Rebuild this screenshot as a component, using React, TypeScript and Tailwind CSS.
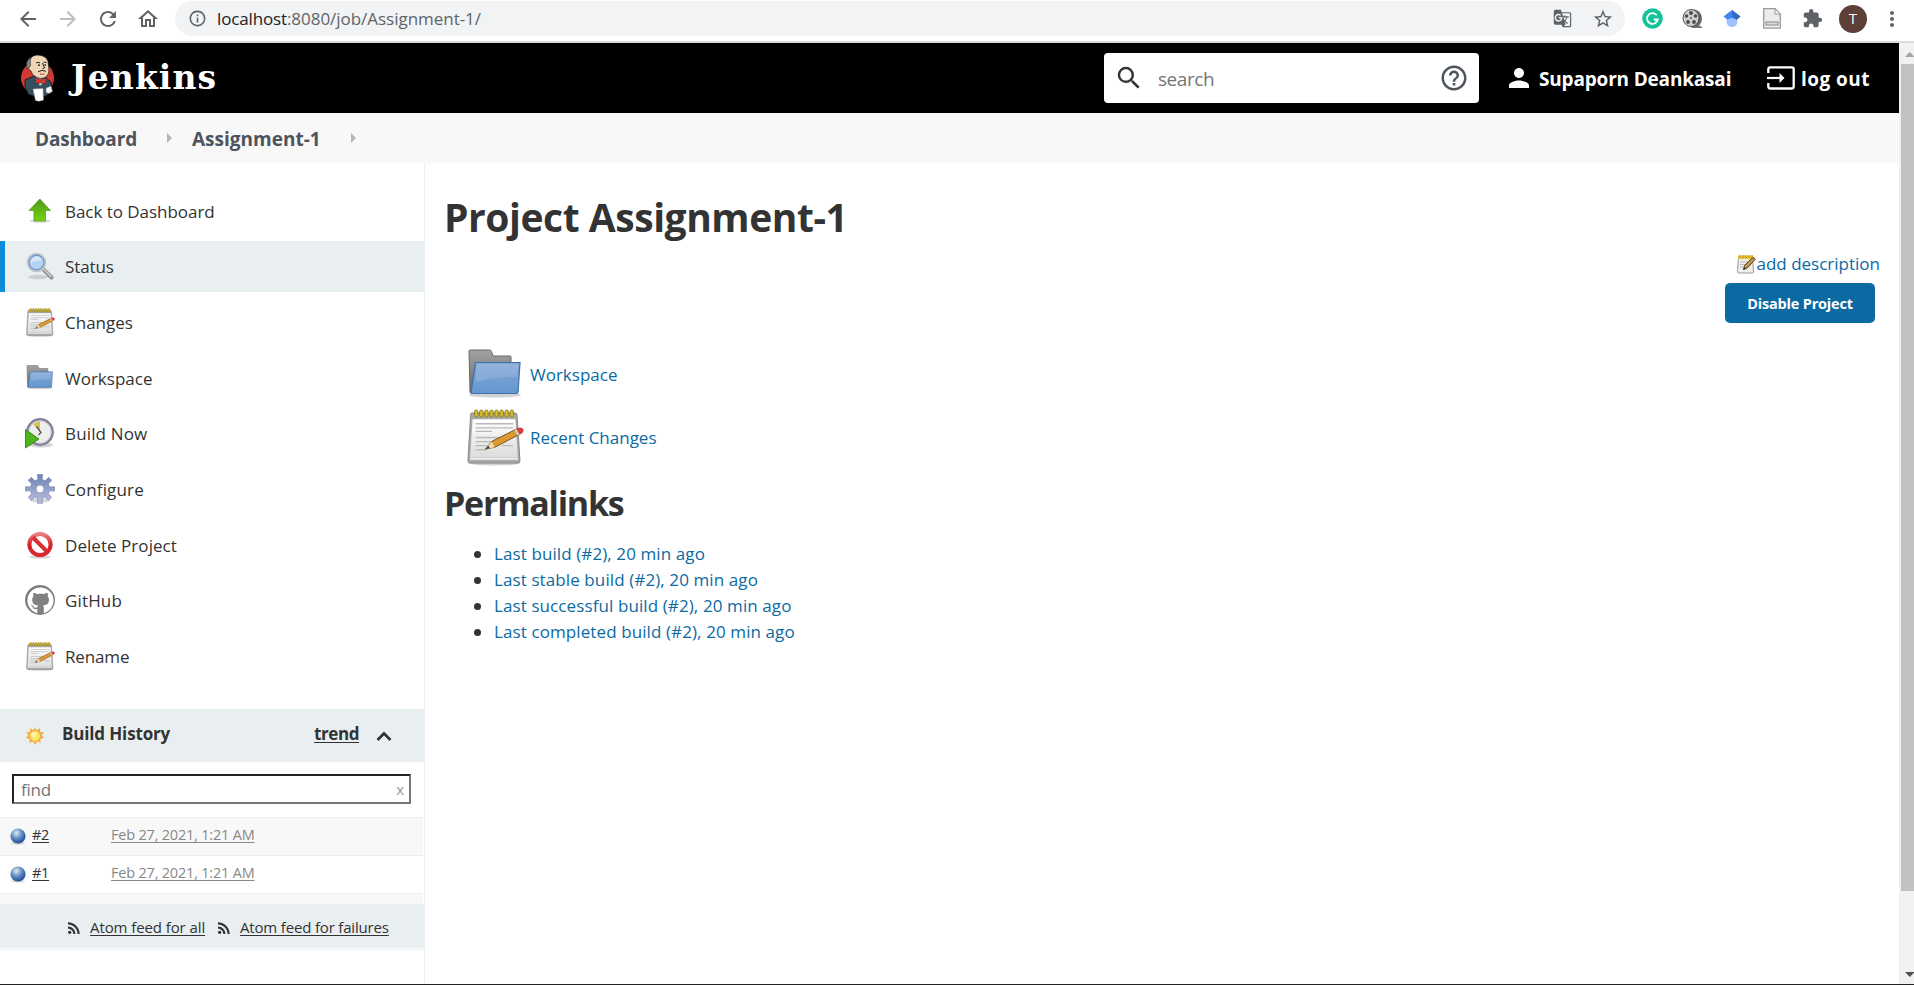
import type { ReactNode } from 'react';
import {
  MdArrowBack, MdArrowForward, MdRefresh, MdOutlineHome, MdInfoOutline, MdGTranslate,
  MdStarBorder, MdExtension, MdMoreVert, MdSearch, MdHelpOutline, MdPerson, MdRssFeed,
} from 'react-icons/md';
import { FaGithub } from 'react-icons/fa';

function T({ className = '', children }: { className?: string; children: ReactNode }) {
  return <span className={'whitespace-nowrap ' + className}>{children}</span>;
}

function JenkinsLogo() {
  return (
    <svg width="36" height="50" viewBox="0 0 36 50">
      <circle cx="18.500" cy="25" r="16.500" fill="#d33833" />
      <path d="M6 27l9-4h10l7 6 1 9-6 5H14L9 41 6 33z" fill="#335061" stroke="#111" strokeWidth=".8" />
      <path d="M16 25l5 8 7-7z" fill="#a9c8d8" />
      <path d="M9.500 9Q11 3 18 2Q27 2 29 8.500L30 17Q29.500 25 22 25.500Q14 24.500 12 18L8.500 15z" fill="#f0d6b7" stroke="#222" strokeWidth=".7" />
      <path d="M8 16Q6 7 12.500 4Q10.500 7.500 11.500 12.500L10 15z" fill="#8a8583" stroke="#222" strokeWidth=".6" />
      <path d="M17 10q2-1.500 4 0M24.500 9.500q1.500-1 3 0M23.500 10l2 5-2 .8M19 18.800q4-2.500 8-.5" fill="none" stroke="#222" strokeWidth="1" />
      <path d="M19 12.300h1.800M25.500 12h1.500" stroke="#222" strokeWidth="1.400" />
      <path d="M21 21q2.500 1 4.500-.2" fill="none" stroke="#9c4a3c" strokeWidth="1" />
      <path d="M16.500 24.500l4.500 2.500 6-2v6.500l-5-2-5.500 1.500z" fill="#d33833" stroke="#7a1512" strokeWidth=".7" />
      <path d="M14 36l10-.5.5 11.500q-4 2-8 .5z" fill="#fff" stroke="#999" strokeWidth=".5" />
      <path d="M27 35l5-2 1.500 5.500-3.500 2-3-1z" fill="#f4f1ee" stroke="#777" strokeWidth=".6" />
    </svg>
  );
}

function Notepad({ size }: { size: number }) {
  return (
    <svg width={size} height={size} viewBox="0 0 56 56">
      <defs>
        <linearGradient id="paper" x1="0" y1="0" x2="0" y2="1"><stop offset="0" stopColor="#fff" /><stop offset="1" stopColor="#dcdcdc" /></linearGradient>
      </defs>
      <ellipse cx="27" cy="53.500" rx="24" ry="2" fill="#000" opacity=".18" />
      <path d="M5 4h42q2 0 2.200 3L52 50q0 3-2 3H3q-2 0-2-3L3.500 7Q3.500 4 5 4z" fill="#aaa" stroke="#888" strokeWidth="1" />
      <path d="M5.500 10h42L50 48H3z" fill="url(#paper)" />
      <path d="M3 49h47" stroke="#eee" strokeWidth="1.500" />
      <path d="M8.500 14.500h37M8.500 18.500h37M8.500 22h16M8.500 28h31M8.500 32h26M8.500 36h14M34 36h11M8.500 40h10" stroke="#b9b9b9" strokeWidth="1.300" />
      {[0, 1, 2, 3, 4, 5, 6, 7].map((i) => (
        <rect key={i} x={7.4 + i * 5} y="1" width="3.300" height="7" rx="1.600" fill="#d8bd2c" stroke="#8d7a18" strokeWidth=".9" />
      ))}
      <path d="M18 39.500l6-7.500 24-12 3.500 5-24 12.500z" fill="#d99a35" stroke="#7b4c11" strokeWidth=".9" />
      <path d="M24 32l3.500 5.500-9.500 2z" fill="#ecd9ac" />
      <path d="M18 39.500l3-3.500 1.300 2.500z" fill="#333" />
      <path d="M46.500 20.800l3 5.200 2.500-1.300-3-5.200z" fill="#ccc" />
      <path d="M49 19.500q4-2 6 .5 1 3-3 4.700z" fill="#e83a34" stroke="#a32320" strokeWidth=".6" />
    </svg>
  );
}

function EditNote() {
  return (
    <svg width="19" height="20" viewBox="0 0 19 20">
      <path d="M1.500 2.500h14l1 15.500q0 1-1 1H1.500q-1 0-1-1z" fill="#eeeeec" stroke="#9a9a96" />
      <path d="M1 1.500h15V5H1z" fill="#ecc63c" />
      <path d="M3 1v3M6 1v3M9 1v3M12 1v3M15 1v3" stroke="#b28d18" strokeWidth="1" />
      <path d="M3 8h9M3 10.500h6M3 13h4" stroke="#bbb" />
      <path d="M6.500 15.500l1.200-4 7.500-7.500q2-1 3 1.200l-7.600 8.500z" fill="#c79a4e" stroke="#4f3a17" strokeWidth="1" />
      <path d="M6.500 15.500l.6-2 1.500 1.400z" fill="#222" />
    </svg>
  );
}

function Folder({ className }: { className: string }) {
  return (
    <svg className={className} viewBox="0 0 56 50">
      <defs>
        <linearGradient id="fold" x1="0" y1="0" x2="0" y2="1"><stop offset="0" stopColor="#86aad6" /><stop offset="1" stopColor="#6396cf" /></linearGradient>
        <linearGradient id="back" x1="0" y1="0" x2="0" y2="1"><stop offset="0" stopColor="#a3a3a3" /><stop offset="1" stopColor="#666" /></linearGradient>
      </defs>
      <ellipse cx="28" cy="46" rx="26" ry="2.500" fill="#000" opacity=".18" />
      <path d="M3 1h20q1 0 1.500 1.500L26 7h17q1 0 1 1v36H4Q3 44 3 43L2 2q0-1 1-1z" fill="url(#back)" stroke="#6a6a6a" />
      <path d="M8.500 13.500h44.500L51 43.500q-.2 1-1.200 1H5q-1 0-1-1z" fill="url(#fold)" stroke="#3d6ead" strokeWidth="1.200" />
      <path d="M9.800 15h41.500l-.9 13Q30 27 8.600 33z" fill="#fff" opacity=".12" />
    </svg>
  );
}

function UpArrow() {
  return (
    <svg width="30" height="30" viewBox="0 0 30 30">
      <defs><linearGradient id="up" x1="0" y1="0" x2="0" y2="1"><stop offset="0" stopColor="#4d9a1c" /><stop offset="1" stopColor="#74d40e" /></linearGradient></defs>
      <ellipse cx="15" cy="25" rx="10.500" ry="1.800" fill="#000" opacity=".15" />
      <path d="M14.800 3L25.500 14.500h-5V25H9V14.500H4z" fill="url(#up)" stroke="#5a9c2c" strokeWidth=".8" />
    </svg>
  );
}

function Magnifier() {
  return (
    <svg width="30" height="30" viewBox="0 0 30 30">
      <ellipse cx="13" cy="25" rx="10" ry="2.200" fill="#000" opacity=".13" />
      <path d="M18 17l8.500 8.500" stroke="#8d8d8d" strokeWidth="4" strokeLinecap="round" />
      <path d="M18 16.500l8 8" stroke="#c4c4c4" strokeWidth="2" strokeLinecap="round" />
      <circle cx="11.500" cy="10.500" r="8.600" fill="#b4d2f2" stroke="#c2c5c9" strokeWidth="2.400" />
      <circle cx="11.500" cy="10.500" r="7.400" fill="none" stroke="#6b93c6" strokeWidth="1.100" />
      <path d="M5.500 11Q6 4.500 12 4.500q4 .5 5 4-7 0-11.500 2.500z" fill="#fff" opacity=".45" />
    </svg>
  );
}

function BuildNow() {
  return (
    <svg width="30" height="32" viewBox="0 0 30 32">
      <ellipse cx="16" cy="28" rx="12" ry="2.500" fill="#000" opacity=".18" />
      <circle cx="15" cy="15" r="12.700" fill="#eeeeea" stroke="#85839c" strokeWidth="2.500" />
      <circle cx="15" cy="15" r="11" fill="none" stroke="#d5d4de" strokeWidth="1" />
      <path d="M15 14L8 7.500Q11 4.500 15 4.500z" fill="#d8c152" />
      <path d="M11.500 9.500l4.500 6-2.500 2.500" fill="none" stroke="#555" strokeWidth="1.300" />
      <path d="M.5 12.500L14 22 .5 31z" fill="#4cb51d" stroke="#397f18" strokeWidth=".9" />
    </svg>
  );
}

function Gear() {
  return (
    <svg width="30" height="30" viewBox="0 0 30 30">
      <defs><linearGradient id="gear" x1="0" y1="0" x2="0" y2="1"><stop offset="0" stopColor="#6784b4" /><stop offset="1" stopColor="#bfbfe0" /></linearGradient></defs>
      <ellipse cx="15" cy="26.500" rx="10" ry="2" fill="#000" opacity=".15" />
      <path d="M12.800 5.500L12.500 .5h5l-.3 5 3 1.300 3.400-3.500 3 3-3.300 3.700 1.200 2.900 5-.2v4.400l-5-.3-1.200 3 3.300 3.600-3 3-3.600-3.300-2.800 1.200.3 5h-5l.3-5-2.900-1.200-3.600 3.300-3-3 3.300-3.600-1.200-3-5 .3v-4.400l5 .2 1.200-2.900-3.300-3.700 3-3 3.500 3.500z" fill="url(#gear)" stroke="#7b88ad" strokeWidth=".7" />
      <circle cx="15" cy="15" r="4" fill="#fff" stroke="#8490b8" strokeWidth=".8" />
    </svg>
  );
}

function NoEntry() {
  return (
    <svg width="30" height="30" viewBox="0 0 30 30">
      <defs><linearGradient id="no" x1="0" y1="0" x2="0" y2="1"><stop offset="0" stopColor="#ea8080" /><stop offset=".5" stopColor="#d91f26" /><stop offset="1" stopColor="#d42a2e" /></linearGradient></defs>
      <ellipse cx="15" cy="27" rx="11" ry="1.800" fill="#000" opacity=".16" />
      <circle cx="15" cy="14.500" r="10.600" fill="#fff" stroke="url(#no)" strokeWidth="4" />
      <path d="M8 7.500l14 14" stroke="#d83035" strokeWidth="4" />
    </svg>
  );
}

function GitHubMark() {
  return (
    <span className="grid size-[30px] place-items-center rounded-full bg-[#808080]">
      <FaGithub size={27} className="rounded-full text-white" />
    </span>
  );
}

function Sun() {
  return (
    <svg width="18" height="18" viewBox="0 0 18 18">
      <path d="M9 0l1.500 3.200L14 1.200l.2 3.700 3.800.3-2.200 3 2.200 2.900-3.600.7.300 3.900-3.400-1.200L9 18l-2-3.500-3.700 1.200.4-3.700L0 11l2.300-2.900L0 5.200l3.800-.3L4 1.200l3.500 2z" fill="#f3ac4c" />
      <circle cx="9" cy="9" r="5.300" fill="#fbe766" stroke="#f2b24a" strokeWidth=".8" />
      <circle cx="8" cy="7.500" r="2.600" fill="#fff6b8" opacity=".8" />
    </svg>
  );
}

function Ball() {
  return (
    <svg width="17" height="18" viewBox="0 0 17 18">
      <defs><radialGradient id="ball" cx=".4" cy=".3" r=".7"><stop offset="0" stopColor="#e2ecec" /><stop offset=".45" stopColor="#6e98c8" /><stop offset="1" stopColor="#1f4a94" /></radialGradient></defs>
      <ellipse cx="8" cy="15.300" rx="7" ry="1.500" fill="#000" opacity=".15" />
      <circle cx="8" cy="8" r="7.600" fill="url(#ball)" />
    </svg>
  );
}

const tasks: { label: string; icon: ReactNode; cls: string }[] = [
  { label: 'Back to Dashboard', icon: <UpArrow />, cls: 'tracking-[-0.04px]' },
  { label: 'Status', icon: <Magnifier />, cls: 'tracking-[-0.1px]' },
  { label: 'Changes', icon: <Notepad size={29} />, cls: '' },
  { label: 'Workspace', icon: <Folder className="h-[25px] w-7" />, cls: '' },
  { label: 'Build Now', icon: <BuildNow />, cls: 'tracking-[0.15px]' },
  { label: 'Configure', icon: <Gear />, cls: 'tracking-[0.15px]' },
  { label: 'Delete Project', icon: <NoEntry />, cls: 'tracking-[0.05px]' },
  { label: 'GitHub', icon: <GitHubMark />, cls: 'tracking-[0.15px]' },
  { label: 'Rename', icon: <Notepad size={29} />, cls: 'tracking-[-0.15px]' },
];

const links = [
  'Last build (#2), 20 min ago',
  'Last stable build (#2), 20 min ago',
  'Last successful build (#2), 20 min ago',
  'Last completed build (#2), 20 min ago',
];

function BrowserBar() {
  return (
    <div className="flex h-[43px] shrink-0 items-start border-b-2 border-[#dadce0] bg-white text-[#5f6368]">
      <div className="flex h-[37px] w-[175px] items-center gap-4 pl-4">
        <MdArrowBack size={24} />
        <MdArrowForward size={24} className="text-[#bbbdc0]" />
        <MdRefresh size={24} />
        <MdOutlineHome size={24} />
      </div>
      <div className="mt-px flex h-[35px] w-[1450px] items-center rounded-full bg-[#f1f3f4] pr-[11px] pl-[13px]">
        <MdInfoOutline size={19} />
        <div className="ml-[10px] flex-1 text-[17px]">
          <T className="tracking-[-0.15px] text-[#202124]">localhost</T>
          <T className="tracking-[-0.03px]">:8080/job/Assignment-1/</T>
        </div>
        <MdGTranslate size={19} />
        <MdStarBorder size={22} className="ml-[20px]" />
      </div>
      <div className="flex h-[37px] items-center pl-[17px]">
        <svg width="21" height="21" viewBox="0 0 21 21"><circle cx="10.500" cy="10.500" r="10.300" fill="#15c39a" /><path d="M14.800 7.200A5.400 5.400 0 1 0 15.800 11.500H11.800M15.800 11.500l-1.600 2.300" fill="none" stroke="#fff" strokeWidth="1.800" /></svg>
        <svg className="ml-[19px]" width="21" height="20" viewBox="0 0 21 20">
          <path d="M9 17.500l9-1 2.500 2.500H10z" fill="#777" /><ellipse cx="12" cy="9.500" rx="8" ry="9" fill="#666" /><ellipse cx="9" cy="9" rx="8" ry="8.500" fill="#d0d0d0" stroke="#555" />
          <g fill="#4c4c4c"><circle cx="9" cy="4" r="2" /><circle cx="4.500" cy="7" r="1.800" /><circle cx="13.500" cy="7" r="1.800" /><circle cx="6" cy="13" r="1.900" /><circle cx="12" cy="13" r="1.900" /><circle cx="9" cy="9" r="1" /></g>
        </svg>
        <svg className="ml-[19px]" width="20" height="18" viewBox="0 0 20 18"><circle cx="10" cy="11.500" r="5.500" fill="#a0c3ff" /><path d="M10 0L1.500 6.500 5.500 9.800Q10 6 14.500 9.800L18.500 6.500z" fill="#4285f4" /><path d="M10 0l8.500 6.500-4 3.300Q12.500 7.600 10 7.400z" fill="#356ac3" /></svg>
        <svg className="ml-[21px]" width="18" height="21" viewBox="0 0 18 21"><path d="M.7 .7H12l5.300 5.500v14H.7z" fill="#ececec" stroke="#999" strokeWidth="1.300" /><path d="M12 .7l5.300 5.500H12z" fill="#fff" stroke="#999" /><rect x="3" y="14" width="12" height="3" fill="#ddd" stroke="#888" /></svg>
        <MdExtension size={21} className="ml-[21px]" />
        <span className="ml-[16px] grid size-7 place-items-center rounded-full bg-[#5d4037] text-[15px] text-white">T</span>
        <MdMoreVert size={24} className="ml-[13px]" />
      </div>
    </div>
  );
}

function Header() {
  return (
    <header className="flex h-[70px] shrink-0 items-center bg-black text-[19px] font-bold text-white">
      <div className="flex w-[1104px] items-center pl-[19px]">
        <JenkinsLogo />
        <T className="ml-4 font-['DejaVu_Serif'] text-[33px] leading-[36px] tracking-[1.1px]">Jenkins</T>
      </div>
      <div className="flex h-[50px] w-[375px] items-center rounded bg-white pr-[10px] pl-[10px] text-[#333]">
        <MdSearch size={30} />
        <T className="ml-[14px] flex-1 pt-[2px] font-normal tracking-[-0.45px] text-[#757575]">search</T>
        <MdHelpOutline size={30} className="text-[#4d545d]" />
      </div>
      <MdPerson size={30} className="ml-[25px]" />
      <T className="ml-[5px] w-[193px] pt-[2px] tracking-[-0.18px]">Supaporn Deankasai</T>
      <svg className="ml-[35px]" width="28" height="24" viewBox="0 0 28 24"><path d="M1.300 7V3.300Q1.300 1.300 3.300 1.300H24.700Q26.700 1.300 26.700 3.300V20.500Q26.700 22.500 24.700 22.500H3.300Q1.300 22.500 1.300 20.500V17" fill="none" stroke="#fff" strokeWidth="2.300" /><path d="M0 12h14" stroke="#fff" strokeWidth="2.200" /><path d="M12.500 7L17.500 12l-5 5z" fill="#fff" /></svg>
      <T className="ml-[6px] pt-[2px] tracking-[0.45px]">log out</T>
    </header>
  );
}

function Crumb() {
  return <svg width="5" height="10" viewBox="0 0 5 10"><path d="M0 0l5 5-5 5z" fill="#b5b5b5" /></svg>;
}

function SidePanel() {
  return (
    <aside className="flex w-[425px] shrink-0 flex-col border-r border-[#e9eff1] text-[17px] text-[#333]">
      <nav className="flex h-[546px] flex-col gap-[4.4px] pt-[22.3px]">
        {tasks.map((t, i) => (
          <a key={t.label} className={'flex h-[51.25px] shrink-0 items-center border-l-[5px] ' + (i === 1 ? 'border-[#0b8bd9] bg-[#e9eff1]' : 'border-transparent')}>
            <span className="ml-5 grid w-[30px] place-items-center">{t.icon}</span>
            <T className={'ml-[10px] pt-px ' + t.cls}>{t.label}</T>
          </a>
        ))}
      </nav>
      <div className="flex h-[53px] items-center bg-[#e9eff1] pl-[26px] font-bold">
        <Sun />
        <T className="-mt-[3px] ml-[18px] w-[252px] tracking-[-0.15px]">Build History</T>
        <T className="-mt-[3px] w-[45px] tracking-[-0.4px] underline underline-offset-2">trend</T>
        <svg className="ml-[17px]" width="16" height="10" viewBox="0 0 16 10"><path d="M1.500 9L8 2.500 14.500 9" fill="none" stroke="#333" strokeWidth="2.700" /></svg>
      </div>
      <div className="mt-3 ml-3 flex h-[30px] w-[399px] items-center justify-between border-2 border-t-[#222] border-r-[#767676] border-b-[#767676] border-l-[#222] pr-[5px] pl-[7px] text-[#757575]">
        <T className="pt-[2px] tracking-[-0.2px]">find</T>
        <T className="text-[15px] text-[#999]">x</T>
      </div>
      <div className="mt-[13px] w-[423px] text-[14.5px]">
        {['#2', '#1'].map((n, i) => (
          <div key={n} className={'flex h-[38px] items-center border-t border-[#e9eef0] pl-[10px] ' + (i === 0 ? 'bg-[#f8f8f8]' : 'bg-white')}>
            <Ball />
            <T className="ml-[5px] w-[79px] pb-[3px] tracking-[-0.3px] underline underline-offset-2">{n}</T>
            <T className="pb-[3px] tracking-[-0.2px] text-[#888] underline underline-offset-2">Feb 27, 2021, 1:21 AM</T>
          </div>
        ))}
        <div className="h-[11px] border-t border-[#e9eef0] bg-[#f8f8f8]" />
      </div>
      <div className="flex h-11 items-center bg-[#e9eff1] pt-[4px] pl-[65px] text-[15px]">
        <MdRssFeed size={18} />
        <T className="ml-[7px] w-[115px] pb-[2px] tracking-[-0.09px] underline underline-offset-2">Atom feed for all</T>
        <MdRssFeed size={18} className="ml-[10px]" />
        <T className="ml-[7px] pb-[2px] tracking-[-0.17px] underline underline-offset-2">Atom feed for failures</T>
      </div>
      <div className="mt-px h-px bg-[#e9eff1]" />
    </aside>
  );
}

function Main() {
  return (
    <main className="flex flex-1 flex-col pr-[19px] pl-[20px] text-[17px] text-[#0b6aa2]">
      <h1 className="mt-[24px] -ml-px h-[62px] text-[39px] leading-[60px] font-bold tracking-[-0.45px] text-[#333]"><T>Project Assignment-1</T></h1>
      <div className="mt-[3px] flex h-6 items-center justify-end gap-px">
        <EditNote />
        <T>add description</T>
      </div>
      <button className="mt-[7px] mr-[5px] h-10 w-[150px] self-end rounded-[5px] bg-[#0b6aa2] pt-px text-[14.5px] font-bold tracking-[-0.2px] text-white"><T>Disable Project</T></button>
      <div className="mt-[25px] ml-[22px] flex h-[52px] items-center">
        <Folder className="h-[50px] w-14" />
        <T className="ml-[7px] pt-[2px]">Workspace</T>
      </div>
      <div className="mt-[8px] ml-[22px] flex h-[58px] items-center">
        <Notepad size={57} />
        <T className="ml-[6px] pt-[2px]">Recent Changes</T>
      </div>
      <h2 className="mt-[11px] -ml-px h-[52px] text-[34px] leading-[52px] font-bold tracking-[-1.25px] text-[#333]"><T>Permalinks</T></h2>
      <ul className="mt-[12px] tracking-[0.1px]">
        {links.map((l) => (
          <li key={l} className="flex h-[26px] items-center gap-[13px] pl-[29px]">
            <span className="size-[7px] rounded-full bg-[#333]" />
            <T>{l}</T>
          </li>
        ))}
      </ul>
    </main>
  );
}

export default function App() {
  return (
    <div className="flex h-[985px] w-[1914px] flex-col overflow-hidden border-b border-[#222] bg-white font-['Open_Sans',sans-serif]">
      <BrowserBar />
      <div className="flex min-h-0 flex-1">
        <div className="flex w-[1899px] flex-col">
          <Header />
          <div className="flex h-[50px] shrink-0 items-center bg-[#f8f8f8] pl-[35px] text-[19px] font-bold text-[#4d545d]">
            <T className="w-[132px] pt-[2px] tracking-[-0.15px]">Dashboard</T>
            <Crumb />
            <T className="ml-5 w-[159px] pt-[2px]">Assignment-1</T>
            <Crumb />
          </div>
          <div className="flex min-h-0 flex-1">
            <SidePanel />
            <Main />
          </div>
        </div>
        <div className="flex w-[15px] flex-col items-end bg-[#f1f1f1]">
          <svg className="h-[21px] w-[13px]" viewBox="0 0 13 21"><path d="M4 14h9.500L8.800 9z" fill="#a3a3a3" /></svg>
          <div className="h-[827px] w-[13px] bg-[#c1c1c1]" />
          <svg className="mt-auto h-[21px] w-[13px]" viewBox="0 0 13 21"><path d="M4 9h9.500L8.800 14z" fill="#505050" /></svg>
        </div>
      </div>
    </div>
  );
}
